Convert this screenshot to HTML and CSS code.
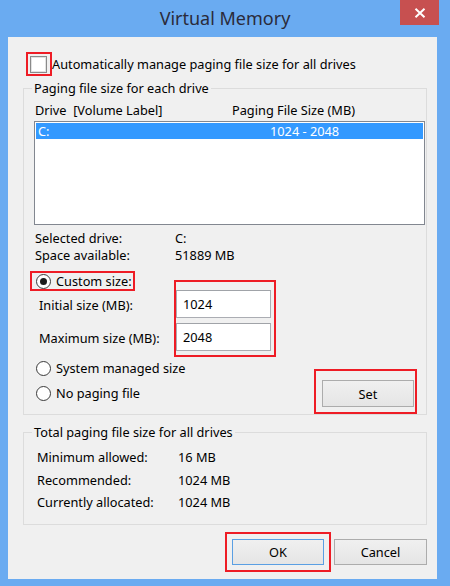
FILE: index.html
```html
<!DOCTYPE html>
<html lang="en">
<head>
    <meta charset="UTF-8">
    <meta name="viewport" content="width=device-width, initial-scale=1.0">
    <title>Virtual Memory</title>
    <link rel="stylesheet" href="styles.css">
</head>
<body>
    <div class="window">
        <div class="titlebar">
            <h1 class="title">Virtual Memory</h1>
            <button type="button" class="close">
                <svg width="12" height="10" viewBox="0 0 12 10"><path d="M1.5 0.8 L10.5 9.2 M10.5 0.8 L1.5 9.2" stroke="#fff" stroke-width="2"/></svg>
            </button>
        </div>

        <div class="client">
            <div class="autoRow">
                <span class="mark markCheck"><span class="checkbox"></span></span>
                <span>Automatically manage paging file size for all drives</span>
            </div>

            <fieldset class="group groupDrives">
                <legend>Paging file size for each drive</legend>
                <div class="colHeads">
                    <span class="headDrive">Drive&nbsp; [Volume Label]</span>
                    <span>Paging File Size (MB)</span>
                </div>
                <div class="listbox">
                    <div class="listRow">
                        <span class="rowDrive">C:</span>
                        <span>1024 - 2048</span>
                    </div>
                </div>
                <div class="info">
                    <span>Selected drive:</span><span>C:</span>
                    <span>Space available:</span><span>51889 MB</span>
                </div>
                <div class="sizeArea">
                    <div class="leftCol">
                        <span class="mark markCustom"><span class="radio checked"></span>Custom size:</span>
                        <span class="sizeLabel initLabel">Initial size (MB):</span>
                        <span class="sizeLabel maxLabel">Maximum size (MB):</span>
                        <span class="radioRow systemRow"><span class="radio"></span>System managed size</span>
                        <span class="radioRow noneRow"><span class="radio"></span>No paging file</span>
                    </div>
                    <div class="mark markInputs">
                        <input type="text" class="textbox" value="1024" readonly>
                        <input type="text" class="textbox" value="2048" readonly>
                    </div>
                    <div class="mark markSet">
                        <button type="button" class="btn">Set</button>
                    </div>
                </div>
            </fieldset>

            <fieldset class="group groupTotal">
                <legend>Total paging file size for all drives</legend>
                <div class="totals">
                    <span>Minimum allowed:</span><span>16 MB</span>
                    <span>Recommended:</span><span>1024 MB</span>
                    <span>Currently allocated:</span><span>1024 MB</span>
                </div>
            </fieldset>

            <div class="footer">
                <span class="mark markOk"><button type="button" class="btn btnDefault">OK</button></span>
                <button type="button" class="btn btnCancel">Cancel</button>
            </div>
        </div>
    </div>
</body>
</html>
```

FILE: styles.css
```css
body {
        margin: 0;
        background-color: #6aabf1;
        font-family: "Noto Sans", sans-serif;
        font-size: 12.75px;
        color: #000000;
}

.window {
        width: 450px;
        height: 586px;
        display: flex;
        flex-direction: column;
}

.titlebar {
        height: 37px;
        display: grid;
        grid-template-columns: 1fr auto 1fr;
}

.title {
        grid-column: 2;
        margin: 0;
        font-size: 18px;
        font-weight: normal;
        line-height: 37px;
        color: #2b2b3b;
}

.close {
        grid-column: 3;
        justify-self: end;
        align-self: start;
        width: 39px;
        height: 25px;
        margin-right: 11px;
        padding: 0;
        border: none;
        background-color: #c75050;
        display: flex;
        align-items: center;
        justify-content: center;
}

.client {
        height: 542px;
        margin: 0 13px 0 8px;
        padding: 15px 10px 0 15px;
        box-sizing: border-box;
        background-color: #f0f0f0;
        display: flex;
        flex-direction: column;
}

/* red highlight frames */
.mark {
        border: 2px solid #ee1c25;
        box-sizing: border-box;
}

.autoRow {
        display: flex;
        align-items: center;
        height: 24px;
        margin-left: 3px;
}

.markCheck {
        width: 26px;
        height: 24px;
        padding-left: 2px;
        display: flex;
        align-items: center;
}

.checkbox {
        width: 17px;
        height: 17px;
        box-sizing: border-box;
        border: 1px solid #8a8a8a;
        box-shadow: inset 0 0 0 1px #e2e2e2;
        background-color: #ffffff;
}

.group {
        margin: 0;
        padding: 0;
        min-width: 0;
        border: 1px solid #dcdcdc;
}

.group legend {
        margin-left: 8px;
        padding: 0 2px;
        line-height: 16px;
}

.groupDrives {
        margin-top: 4px;
}

.colHeads {
        display: flex;
        margin: 6px 0 0 11px;
        line-height: 16px;
}

.headDrive {
        width: 197px;
}

.listbox {
        width: 391px;
        height: 104px;
        margin: 3px 0 0 10px;
        padding: 1px;
        box-sizing: border-box;
        border: 1px solid #828790;
        background-color: #ffffff;
}

.listRow {
        display: flex;
        height: 16px;
        line-height: 16px;
        padding-left: 2px;
        background-color: #3399ff;
        color: #ffffff;
}

.rowDrive {
        width: 232px;
}

.info {
        display: grid;
        grid-template-columns: 140px auto;
        margin: 5px 0 0 11px;
        line-height: 17px;
}

.sizeArea {
        display: flex;
        align-items: flex-start;
        margin: 7px 0 0 6px;
}

.leftCol {
        width: 144px;
        display: flex;
        flex-direction: column;
        align-items: flex-start;
        white-space: nowrap;
}

.markCustom {
        height: 20px;
        padding: 0 1px 0 4px;
        display: flex;
        align-items: center;
        gap: 5px;
}

.radio {
        flex: none;
        width: 15px;
        height: 15px;
        box-sizing: border-box;
        border: 1px solid #3a3a3a;
        border-radius: 50%;
        background-color: #ffffff;
        display: flex;
        align-items: center;
        justify-content: center;
}

.radio.checked::after {
        content: "";
        width: 7px;
        height: 7px;
        border-radius: 50%;
        background-color: #1b1b1b;
}

.sizeLabel {
        padding-left: 9px;
        line-height: 16px;
}

.initLabel {
        margin-top: 6px;
}

.maxLabel {
        margin-top: 17px;
}

.radioRow {
        height: 16px;
        padding-left: 6px;
        display: flex;
        align-items: center;
        gap: 5px;
}

.systemRow {
        margin-top: 14px;
}

.noneRow {
        margin-top: 9px;
}

.markInputs {
        width: 102px;
        margin-top: 9px;
        padding: 8px 3px 4px 0;
        display: flex;
        flex-direction: column;
        gap: 5px;
}

.textbox {
        width: 95px;
        height: 28px;
        box-sizing: border-box;
        padding: 0 0 0 6px;
        border: 1px solid #abadb3;
        border-top-color: #a0a3a8;
        background-color: #ffffff;
        font: inherit;
        color: #000000;
        outline: none;
}

.markSet {
        width: 103px;
        height: 45px;
        margin: 98px 0 0 38px;
        padding: 9px 1px 5px 6px;
}

.btn {
        width: 92px;
        height: 26px;
        padding: 0;
        border: 1px solid #acacac;
        background: linear-gradient(#f0f0f0, #e5e5e5);
        font: inherit;
        color: #000000;
}

.markSet .btn {
        height: 27px;
}

.groupTotal {
        margin-top: 9px;
}

.totals {
        display: grid;
        grid-template-columns: 141px auto;
        margin: 6px 0 10px 13px;
        line-height: 22.5px;
}

.footer {
        display: flex;
        justify-content: flex-end;
        align-items: center;
        gap: 3px;
        margin-top: 7px;
}

.markOk {
        width: 106px;
        height: 40px;
        padding: 5px;
        display: flex;
        align-items: center;
        justify-content: center;
}

.btnDefault {
        border-color: #5a9fe3;
}

.btnCancel {
        width: 93px;
}
```
